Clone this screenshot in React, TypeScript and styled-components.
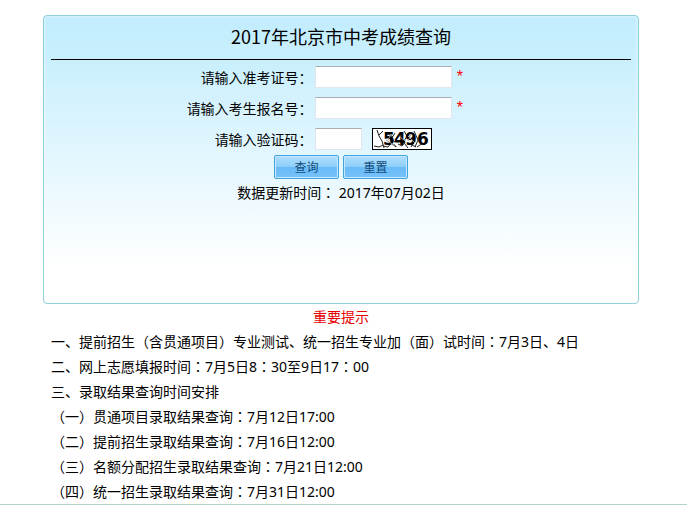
import React from "react";
import styled, { createGlobalStyle } from "styled-components";

const GlobalStyle = createGlobalStyle`
  * { box-sizing: border-box; }
  body {
    margin: 0;
    background: #fff;
    color: #000;
    font: 14px/25px "Noto Sans", "Noto Sans CJK SC", sans-serif;
  }
`;

const Page = styled.main`
  padding: 15px 48px 0 43px;
`;

const Card = styled.form`
  min-height: 289px;
  padding: 0 7px;
  border: 1px solid #8fcfd8;
  border-radius: 4px;
  background: linear-gradient(#c2edfe 0%, #c8effd 14%, #e2f6fe 48%, #fff 88%);
  box-shadow: inset 0 0 0 2px rgba(255, 255, 255, 0.25);
`;

const Title = styled.h1`
  margin: 0 0 1px;
  height: 44px;
  border-bottom: 1px solid #000;
  font: 18px/40px "Noto Sans CJK SC", sans-serif;
  text-align: center;
`;

const Row = styled.div`
  display: grid;
  grid-template-columns: 5fr 6fr;
  align-items: center;
  height: 31px;
`;

const Label = styled.label`
  padding-right: 2px;
  font-family: "Noto Sans CJK SC", sans-serif;
  line-height: 24px;
  text-align: right;
  white-space: nowrap;
`;

const Field = styled.div`
  display: flex;
  align-items: center;
`;

const TextInput = styled.input<{ $short?: boolean }>`
  width: ${(p) => (p.$short ? 47 : 137)}px;
  height: 22px;
  padding: 1px 3px;
  border: 1px solid #dfe6ee;
  border-top-color: #abadb3;
  background: #fff;
  font: inherit;
`;

const Star = styled.span`
  margin-left: 5px;
  color: #f00;
  font: 16px/22px "Liberation Sans", sans-serif;
`;

const CaptchaImage = styled.svg`
  display: block;
  margin-left: 10px;
`;

const Actions = styled.div`
  display: flex;
  justify-content: center;
  gap: 4px;
  padding: 1px 0;
`;

const Button = styled.button`
  width: 65px;
  height: 24px;
  padding: 0;
  border: 1px solid #42a4df;
  border-radius: 2px;
  background: linear-gradient(#b0defd 0%, #8ecffb 48%, #68baf8 50%, #78c2fb 100%);
  box-shadow: inset 0 0 0 1px #c5e8ff;
  color: #114b78;
  font: 12px/20px "Noto Sans CJK SC", sans-serif;
`;

const Updated = styled.p`
  margin: 0;
  line-height: 24px;
  text-align: center;
`;

const Notice = styled.section`
  padding: 0 8px;
`;

const NoticeTitle = styled.h2`
  margin: 0;
  color: #e60000;
  font: inherit;
  text-align: center;
`;

const NoticeLine = styled.p`
  margin: 0;
`;

const CenteredMark = styled.span`
  font-family: "Noto Sans CJK TC", sans-serif;
`;

const BottomRule = styled.hr`
  height: 1px;
  margin: 0;
  border: 0;
  background: #b4d2cc;
`;

const notes = [
  "一、提前招生（含贯通项目）专业测试、统一招生专业加（面）试时间：7月3日、4日",
  "二、网上志愿填报时间：7月5日8：30至9日17：00",
  "三、录取结果查询时间安排",
  "（一）贯通项目录取结果查询：7月12日17:00",
  "（二）提前招生录取结果查询：7月16日12:00",
  "（三）名额分配招生录取结果查询：7月21日12:00",
  "（四）统一招生录取结果查询：7月31日12:00",
];

/* Sets full-width colons in the middle of their cell. */
function Centered({ text }: { text: string }) {
  return (
    <>
      {text.split(/(：)/).map((part, i) =>
        i % 2 ? <CenteredMark key={i}>{part}</CenteredMark> : part
      )}
    </>
  );
}

function Captcha() {
  return (
    <CaptchaImage width="60" height="22" viewBox="0 0 60 22" role="img" aria-label="验证码 5496">
      <rect x="0.5" y="0.5" width="59" height="21" fill="#fff" stroke="#000" />
      <path
        d="M5 2l2 6 3 5 2 7M11 3L7 7M2 18l5 1 4-2M11 18l5 1 3-4 5 4M15 5l6 4M15 9l8 5M23 5l-5 8M26 16l4 2 3-4M32 3l3 5-4 7M30 12l6 8M36 15l8 4M42 3l4 9-3 7M45 19l6-4M39 19l4-6"
        fill="none"
        stroke="#222"
      />
      <g fontFamily="DejaVu Sans, sans-serif" fontSize="17" fontWeight="700">
        <text x="11" y="17">5</text>
        <text x="22" y="17">4</text>
        <text x="33" y="17">9</text>
        <text x="45" y="17">6</text>
      </g>
      <path d="M19 6l-3 6M27 8l6 5M39 6l-3 7M22 16l3 3M14 12l8 5M36 8l7 7" fill="none" stroke="#999" />
    </CaptchaImage>
  );
}

export default function App() {
  return (
    <>
      <GlobalStyle />
      <Page>
        <Card onSubmit={(e) => e.preventDefault()}>
          <Title>2017年北京市中考成绩查询</Title>
          <Row>
            <Label htmlFor="ticket">请输入准考证号：</Label>
            <Field>
              <TextInput id="ticket" type="text" />
              <Star>*</Star>
            </Field>
          </Row>
          <Row>
            <Label htmlFor="signup">请输入考生报名号：</Label>
            <Field>
              <TextInput id="signup" type="text" />
              <Star>*</Star>
            </Field>
          </Row>
          <Row>
            <Label htmlFor="code">请输入验证码：</Label>
            <Field>
              <TextInput id="code" type="text" $short />
              <Captcha />
            </Field>
          </Row>
          <Actions>
            <Button type="submit">查询</Button>
            <Button type="reset">重置</Button>
          </Actions>
          <Updated>
            <Centered text="数据更新时间： 2017年07月02日" />
          </Updated>
        </Card>
        <Notice>
          <NoticeTitle>重要提示</NoticeTitle>
          {notes.map((note) => (
            <NoticeLine key={note}>
              <Centered text={note} />
            </NoticeLine>
          ))}
        </Notice>
      </Page>
      <BottomRule />
    </>
  );
}
